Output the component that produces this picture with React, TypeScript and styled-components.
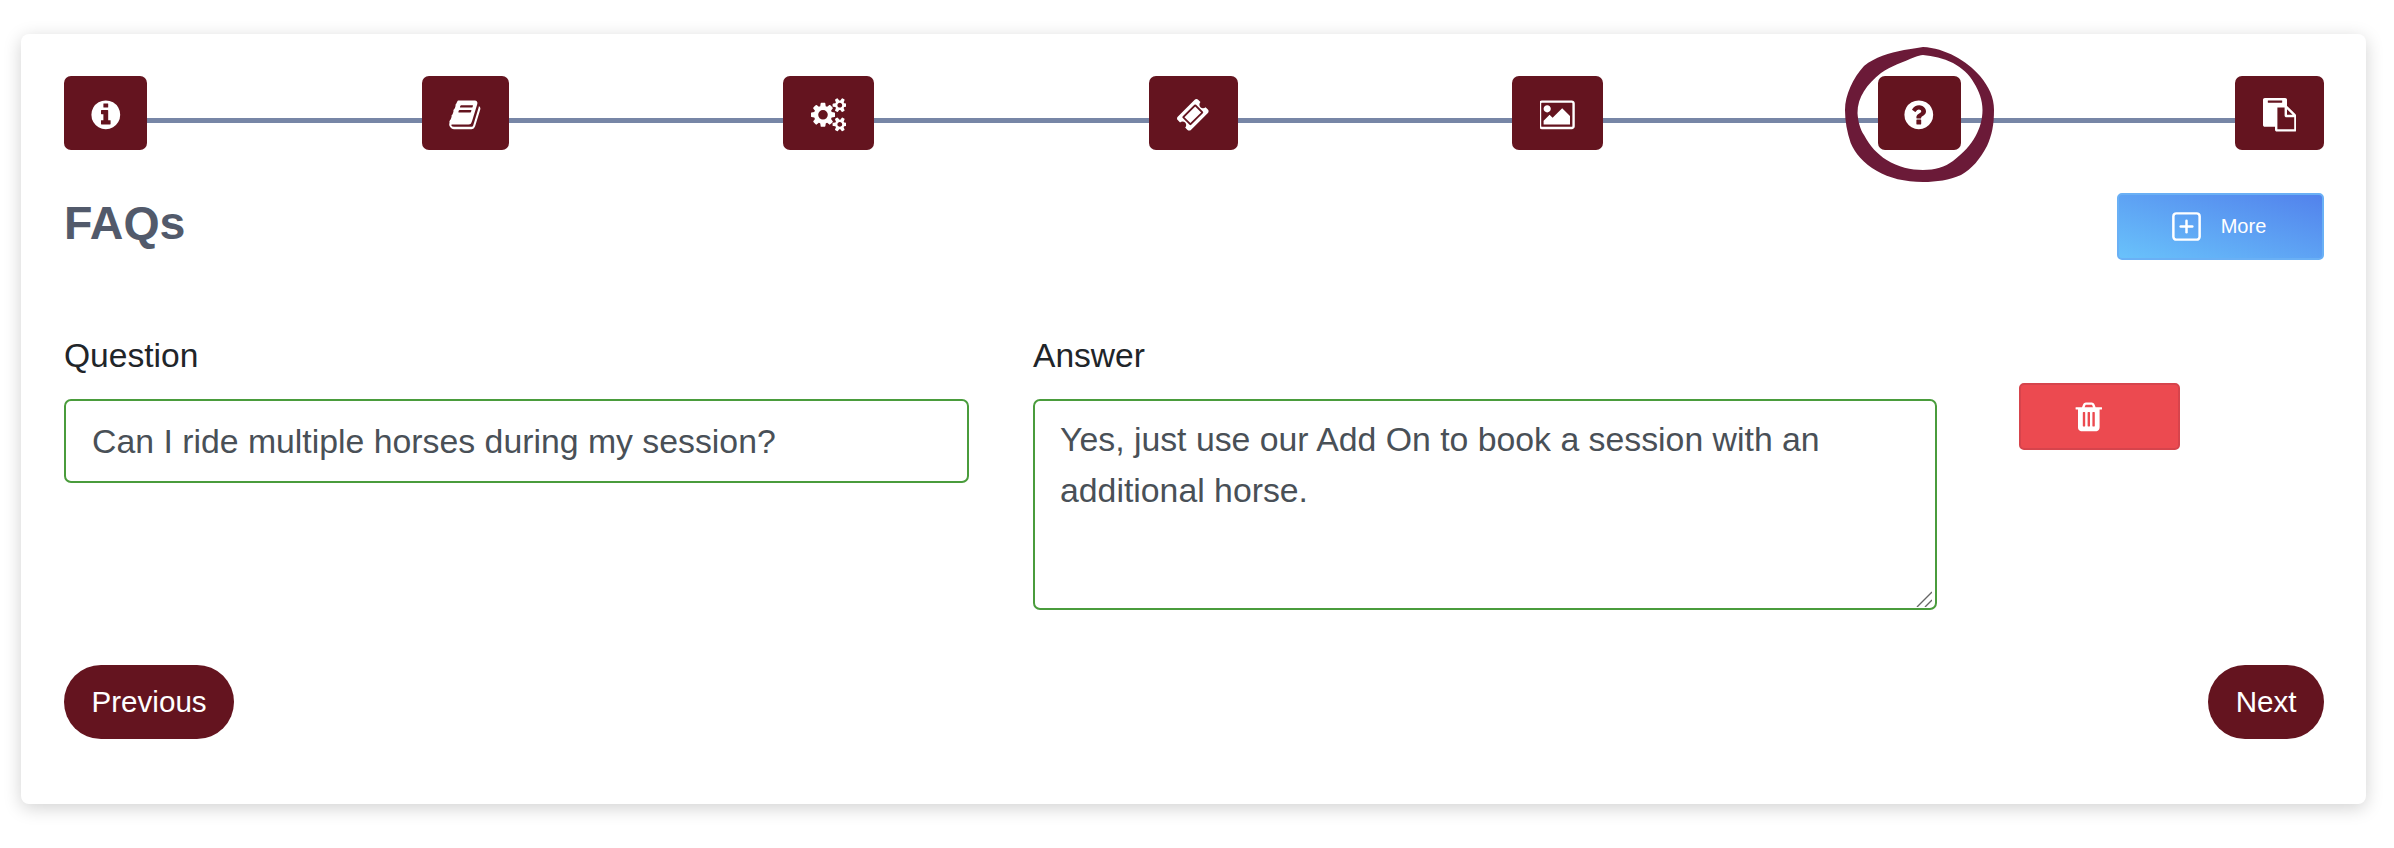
import { createGlobalStyle, styled } from "styled-components"
import { SquarePlus } from "lucide-react"

// font-awesome 4 glyphs, the newer sets in react-icons have redrawn these
const ICONS = {
    info: { box: "0 0 1792 1792", d: "M1152 1376v-160q0-14-9-23t-23-9h-96v-512q0-14-9-23t-23-9h-320q-14 0-23 9t-9 23v160q0 14 9 23t23 9h96v320h-96q-14 0-23 9t-9 23v160q0 14 9 23t23 9h448q14 0 23-9t9-23zm-128-896v-160q0-14-9-23t-23-9h-192q-14 0-23 9t-9 23v160q0 14 9 23t23 9h192q14 0 23-9t9-23zm640 416q0 209-103 385.5t-279.5 279.5-385.5 103-385.5-103-279.5-279.5-103-385.5 103-385.5 279.5-279.5 385.5-103 385.5 103 279.5 279.5 103 385.5z" },
    book: { box: "0 0 1792 1792", d: "M1703 478q40 57 18 129l-275 906q-19 64-76.5 107.5t-122.5 43.5h-923q-77 0-148.5-53.5t-99.5-131.5q-24-67-2-127 0-4 3-27t4-37q1-8-3-21.5t-3-19.5q2-11 8-21t16.5-23.5 16.5-23.5q23-38 45-91.5t30-91.5q3-10 .5-30t-.5-28q3-11 17-28t17-23q21-36 42-92t25-90q1-9-2.5-32t.5-28q4-13 22-30.5t22-22.5q19-26 42.5-84.5t27.5-96.5q1-8-3-25.5t-2-26.5q2-8 9-18t18-23 17-21q8-12 16.5-30.5t15-35 16-36 19.5-32 26.5-23.5 36-11.5 47.5 5.5l-1 3q38-9 51-9h761q74 0 114 56t18 130l-274 906q-36 119-71.5 153.5t-128.5 34.5h-869q-27 0-38 15-11 16-1 43 24 70 144 70h923q29 0 56-15.5t35-41.5l300-987q7-22 5-57 38 15 59 43zm-1064 2q-4 13 2 22.5t20 9.5h608q13 0 25.5-9.5t16.5-22.5l21-64q4-13-2-22.5t-20-9.5h-608q-13 0-25.5 9.5t-16.5 22.5zm-83 256q-4 13 2 22.5t20 9.5h608q13 0 25.5-9.5t16.5-22.5l21-64q4-13-2-22.5t-20-9.5h-608q-13 0-25.5 9.5t-16.5 22.5z" },
    cogs: { box: "0 0 1920 1792", d: "M896 896q0-106-75-181t-181-75-181 75-75 181 75 181 181 75 181-75 75-181zm768 512q0-52-38-90t-90-38-90 38-38 90q0 53 37.5 90.5t90.5 37.5 90.5-37.5 37.5-90.5zm0-1024q0-52-38-90t-90-38-90 38-38 90q0 53 37.5 90.5t90.5 37.5 90.5-37.5 37.5-90.5zm-384 421v185q0 10-7 19.5t-16 10.5l-155 24q-11 35-32 76 34 48 90 115 7 11 7 20 0 12-7 19-23 30-82.5 89.5t-78.5 59.5q-11 0-21-7l-115-90q-37 19-77 31-11 108-23 155-7 24-30 24h-186q-11 0-20-7.5t-10-17.5l-23-153q-34-10-75-31l-118 89q-7 7-20 7-11 0-21-8-144-133-144-160 0-9 7-19 10-14 41-53t47-61q-23-44-35-82l-152-24q-10-1-17-9.5t-7-19.5v-185q0-10 7-19.5t16-10.5l155-24q11-35 32-76-34-48-90-115-7-11-7-20 0-12 7-20 22-30 82-89t79-59q11 0 21 7l115 90q34-18 77-32 11-108 23-154 7-24 30-24h186q11 0 20 7.5t10 17.5l23 153q34 10 75 31l118-89q8-7 20-7 11 0 21 8 144 133 144 160 0 8-7 19-12 16-42 54t-45 60q23 48 34 82l152 23q10 2 17 10.5t7 19.5zm640 533v140q0 16-149 31-12 27-30 52 51 113 51 138 0 4-4 7-122 71-124 71-8 0-46-47t-52-68q-20 2-30 2t-30-2q-14 21-52 68t-46 47q-2 0-124-71-4-3-4-7 0-25 51-138-18-25-30-52-149-15-149-31v-140q0-16 149-31 13-29 30-52-51-113-51-138 0-4 4-7 4-2 35-20t59-34 30-16q8 0 46 46.5t52 67.5q20-2 30-2t30 2q51-71 92-112l6-2q4 0 124 70 4 3 4 7 0 25-51 138 17 23 30 52 149 15 149 31zm0-1024v140q0 16-149 31-12 27-30 52 51 113 51 138 0 4-4 7-122 71-124 71-8 0-46-47t-52-68q-20 2-30 2t-30-2q-14 21-52 68t-46 47q-2 0-124-71-4-3-4-7 0-25 51-138-18-25-30-52-149-15-149-31v-140q0-16 149-31 13-29 30-52-51-113-51-138 0-4 4-7 4-2 35-20t59-34 30-16q8 0 46 46.5t52 67.5q20-2 30-2t30 2q51-71 92-112l6-2q4 0 124 70 4 3 4 7 0 25-51 138 17 23 30 52 149 15 149 31z" },
    ticket: { box: "0 0 1792 1792", d: "M1024 452l316 316-572 572-316-316zm-211 979l618-618q19-19 19-45t-19-45l-362-362q-18-18-45-18t-45 18l-618 618q-19 19-19 45t19 45l362 362q18 18 45 18t45-18zm889-637l-907 908q-37 37-90.5 37t-90.5-37l-126-126q56-56 56-136t-56-136-136-56-136 56l-125-126q-37-37-37-90.5t37-90.5l907-906q37-37 90.5-37t90.5 37l125 125q-56 56-56 136t56 136 136 56 136-56l126 125q37 37 37 90.5t-37 90.5z" },
    picture: { box: "0 0 1920 1792", d: "M576 576q0 80-56 136t-136 56-136-56-56-136 56-136 136-56 136 56 56 136zm1024 384v448h-1408v-192l320-320 160 160 512-512zm96-704h-1600q-13 0-22.5 9.5t-9.5 22.5v1216q0 13 9.5 22.5t22.5 9.5h1600q13 0 22.5-9.5t9.5-22.5v-1216q0-13-9.5-22.5t-22.5-9.5zm160 32v1216q0 66-47 113t-113 47h-1600q-66 0-113-47t-47-113v-1216q0-66 47-113t113-47h1600q66 0 113 47t47 113z" },
    question: { box: "0 0 1792 1792", d: "M1024 1376v-192q0-14-9-23t-23-9h-192q-14 0-23 9t-9 23v192q0 14 9 23t23 9h192q14 0 23-9t9-23zm256-672q0-88-55.5-163t-138.5-116-170-41q-243 0-371 213-15 24 8 42l132 100q7 6 19 6 16 0 25-12 53-68 86-92 34-24 86-24 48 0 85.5 26t37.5 59q0 38-20 61t-68 45q-63 28-115.5 86.5t-52.5 125.5v36q0 14 9 23t23 9h192q14 0 23-9t9-23q0-19 21.5-49.5t54.5-49.5q32-18 49-28.5t46-35 44.5-48 28-60.5 12.5-81zm384 192q0 209-103 385.5t-279.5 279.5-385.5 103-385.5-103-279.5-279.5-103-385.5 103-385.5 279.5-279.5 385.5-103 385.5 103 279.5 279.5 103 385.5z" },
    paste: { box: "0 0 1792 1792", d: "M768 1664h896v-640h-416q-40 0-68-28t-28-68v-416h-384v1152zm256-1440v-64q0-13-9.5-22.5t-22.5-9.5h-704q-13 0-22.5 9.5t-9.5 22.5v64q0 13 9.5 22.5t22.5 9.5h704q13 0 22.5-9.5t9.5-22.5zm256 672h299l-299-299v299zm512 128v672q0 40-28 68t-68 28h-960q-40 0-68-28t-28-68v-160h-544q-40 0-68-28t-28-68v-1344q0-40 28-68t68-28h1088q40 0 68 28t28 68v328q21 13 36 28l408 408q28 28 48 76t20 88z" },
    trash: { box: "0 0 1792 1792", d: "M704 1376v-704q0-14-9-23t-23-9h-64q-14 0-23 9t-9 23v704q0 14 9 23t23 9h64q14 0 23-9t9-23zm256 0v-704q0-14-9-23t-23-9h-64q-14 0-23 9t-9 23v704q0 14 9 23t23 9h64q14 0 23-9t9-23zm256 0v-704q0-14-9-23t-23-9h-64q-14 0-23 9t-9 23v704q0 14 9 23t23 9h64q14 0 23-9t9-23zm-544-992h448l-48-117q-7-9-17-11h-317q-10 2-17 11zm928 32v64q0 14-9 23t-23 9h-96v948q0 83-47 143.5t-113 60.5h-832q-66 0-113-58.5t-47-141.5v-952h-96q-14 0-23-9t-9-23v-64q0-14 9-23t23-9h309l70-167q15-37 54-63t79-26h320q40 0 79 26t54 63l70 167h309q14 0 23 9t9 23z" },
}

const steps: { width: number; icon: keyof typeof ICONS; circled?: boolean }[] = [
    { width: 83, icon: "info" },
    { width: 87, icon: "book" },
    { width: 91, icon: "cogs" },
    { width: 89, icon: "ticket" },
    { width: 91, icon: "picture" },
    { width: 83, icon: "question", circled: true },
    { width: 89, icon: "paste" },
]

function FaIcon({ name }: { name: keyof typeof ICONS }) {
    return (
        <Glyph viewBox={ICONS[name].box}>
            <path d={ICONS[name].d} />
        </Glyph>
    )
}

function ScribbleCircle() {
    return (
        <Scribble viewBox="0 0 149 135">
            <path
                fillRule="evenodd"
                d="M78 0 C100 1 122 14 135 29 C144 40 149 50 149 63 C149 78 147 88 142 99 C135 112 127 122 116 128 C104 133 92 135 78 135 C60 135 44 131 32 124 C18 116 10 106 5.7 96 C2 85 0 74 0 63 C0 48 8 31 19 19 C30 10 44 6 59 3 C66 2 72 1 78 0 Z
                M70 10 C58 15 46 19 36 26 C22 37 12.5 50 12.5 66 C13 74 15 82 19 88 C25 99 32 107 41.7 113 C53 120 66 123 78 123 C90 123 100 120 108 114 C118 106 126 98 130.6 89 C135 81 137.5 72 137.5 63 C137.5 53 134 44 129 36 C124 27 117 21 108 16 C98 11 88 9 78 8 C75 8 73 9 70 10 Z"
            />
        </Scribble>
    )
}

export default function App() {
    return <>
        <GlobalStyle />
        <Card>
            <Stepper>
                {steps.map((step) => (
                    <Step key={step.icon} $width={step.width}>
                        <FaIcon name={step.icon} />
                        {step.circled && <ScribbleCircle />}
                    </Step>
                ))}
            </Stepper>

            <Header>
                <Title>FAQs</Title>
                <MoreButton>
                    <SquarePlus size={35} strokeWidth={1.7} />
                    More
                </MoreButton>
            </Header>

            <FaqRow>
                <Field>
                    <Label>Question</Label>
                    <TextInput readOnly value="Can I ride multiple horses during my session?" />
                </Field>
                <Field>
                    <Label>Answer</Label>
                    <TextAreaBox>
                        <TextArea readOnly value="Yes, just use our Add On to book a session with an additional horse." />
                        <ResizeGrip viewBox="0 0 16 16">
                            <path d="M1 16 L16 1 M9 16 L16 9" />
                        </ResizeGrip>
                    </TextAreaBox>
                </Field>
                <DeleteButton><FaIcon name="trash" /></DeleteButton>
            </FaqRow>

            <Footer>
                <NavButton>Previous</NavButton>
                <NavButton>Next</NavButton>
            </Footer>
        </Card>
    </>
}

const GlobalStyle = createGlobalStyle`
    html, body {
        margin: 0;
        background: #fff;
    }
    body {
        padding: 34px 28px 44px 21px;
        font-family: "Liberation Sans", Arial, sans-serif;
    }
`

const Card = styled.div`
    background: #fff;
    border-radius: 8px;
    box-shadow: 0 4px 18px rgba(0, 0, 0, 0.18);
    height: 770px;
    box-sizing: border-box;
    padding: 42px 42px 0 43px;
`

const Stepper = styled.div`
    display: flex;
    justify-content: space-between;
    position: relative;

    &::before {
        content: "";
        position: absolute;
        left: 0;
        right: 0;
        top: 42px;
        height: 5px;
        background: #7786a6;
    }
`

const Step = styled.div<{ $width: number }>`
    position: relative;
    box-sizing: border-box;
    width: ${props => props.$width}px;
    height: 74px;
    padding-top: 4px;
    background: #64141f;
    border-radius: 7px;
    color: #fff;
    display: flex;
    align-items: center;
    justify-content: center;
    font-size: 33.6px;
`

const Glyph = styled.svg`
    height: 1em;
    fill: currentColor;
`

const Scribble = styled.svg`
    position: absolute;
    left: -33px;
    top: -29px;
    width: 149px;
    height: 135px;
    fill: #6b1a38;
    pointer-events: none;
`

const Header = styled.div`
    display: flex;
    justify-content: space-between;
    align-items: flex-start;
    margin-top: 43px;
`

const Title = styled.h2`
    margin: 0;
    padding-top: 3px;
    color: #525a6b;
    font-size: 46.5px;
    font-weight: 700;
    line-height: 54px;
`

const MoreButton = styled.button`
    width: 207px;
    height: 67px;
    padding: 0 6px 0 0;
    border: 2px solid #6ab0f5;
    border-radius: 5px;
    background: linear-gradient(to top right, #69c2fb, #5282ec);
    color: #fff;
    font: 20px "Liberation Sans", Arial, sans-serif;
    display: flex;
    align-items: center;
    justify-content: center;
    gap: 17px;
`

const FaqRow = styled.div`
    display: grid;
    grid-template-columns: 905px 904px 161px;
    column-gap: 64px;
    margin-top: 76px;

    & > :last-child {
        margin-left: 18px;
    }
`

const Field = styled.div`
    display: flex;
    flex-direction: column;
`

const Label = styled.label`
    color: #212529;
    font-size: 33.6px;
    line-height: 40px;
    margin-bottom: 23px;
`

const TextInput = styled.input`
    box-sizing: border-box;
    height: 84px;
    padding: 0 26px;
    border: 2px solid #4a9c3c;
    border-radius: 7px;
    color: #495057;
    font: 33.8px "Liberation Sans", Arial, sans-serif;
    outline: none;
`

const TextAreaBox = styled.div`
    position: relative;
    display: flex;
`

const TextArea = styled.textarea`
    box-sizing: border-box;
    width: 100%;
    height: 211px;
    padding: 13px 25px;
    border: 2px solid #4a9c3c;
    border-radius: 7px;
    color: #495057;
    font: 33.8px/51px "Liberation Sans", Arial, sans-serif;
    outline: none;
    resize: none;
`

const ResizeGrip = styled.svg`
    position: absolute;
    right: 5px;
    bottom: 3px;
    width: 16px;
    height: 16px;
    fill: none;
    stroke: #666;
    stroke-width: 1.4;
    pointer-events: none;
`

const DeleteButton = styled.button`
    box-sizing: border-box;
    width: 161px;
    height: 67px;
    margin-top: 47px;
    padding: 0 22px 0 0;
    border: 2px solid #d6444c;
    border-radius: 5px;
    background: #ec4a50;
    color: #fff;
    font-size: 33.6px;
    display: flex;
    align-items: center;
    justify-content: center;
`

const Footer = styled.div`
    display: flex;
    justify-content: space-between;
    margin-top: 55px;
`

const NavButton = styled.button`
    height: 74px;
    padding: 0 27.5px;
    border: 0;
    border-radius: 37px;
    background: #64141f;
    color: #fff;
    font: 29.6px "Liberation Sans", Arial, sans-serif;
`
